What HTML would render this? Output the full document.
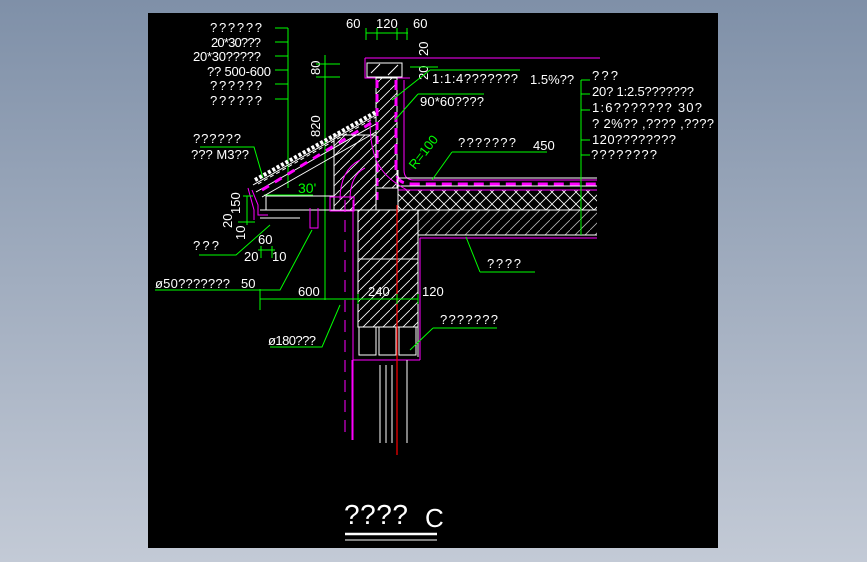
<!DOCTYPE html>
<html><head><meta charset="utf-8"><style>
html,body{margin:0;padding:0;width:867px;height:562px;overflow:hidden;background:linear-gradient(#7f90a8,#c3cad6);}
svg{position:absolute;left:0;top:0}
text{font-family:"Liberation Sans Narrow","Liberation Sans",sans-serif;fill:#fff;font-size:13px}
.g{stroke:#00ff00;fill:none;stroke-width:1}
.w{stroke:#fff;fill:none;stroke-width:1}
.m{stroke:#ff00ff;fill:none;stroke-width:1}
.gt{fill:#00ff00}
</style></head><body>
<svg width="867" height="562" viewBox="0 0 867 562">
<defs>
<pattern id="hatch" width="10" height="10" patternUnits="userSpaceOnUse"><path d="M0 10 L10 0" stroke="#fff" stroke-width="0.8"/></pattern>
<pattern id="cross" width="12" height="12" patternUnits="userSpaceOnUse"><path d="M0 0 L12 12 M12 0 L0 12" stroke="#fff" stroke-width="0.8"/></pattern>
</defs>
<rect x="148" y="13" width="570" height="535" fill="#000"/>

<text x="210" y="32" textLength="52">??????</text>
<text x="211" y="47" textLength="50">20*30???</text>
<text x="193" y="61" textLength="68">20*30?????</text>
<text x="207" y="76" textLength="64">?? 500-600</text>
<text x="210" y="90" textLength="52">??????</text>
<text x="210" y="105" textLength="52">??????</text>
<path class="g" d="M288 28 V188 M275 28 H288 M275 42 H288 M275 56 H288 M275 70 H288 M275 84 H288 M275 99 H288"/>
<text x="193" y="143" textLength="48">??????</text>
<text x="191" y="159" textLength="58">??? M3??</text>
<path class="g" d="M200 147 H254 L263 178"/>

<text x="346" y="28">60</text><text x="376" y="28">120</text><text x="413" y="28">60</text>
<path class="g" d="M366 33 H408 M366 28 V40 M377 28 V40 M397 28 V40 M407 28 V40"/>
<text transform="translate(428,56) rotate(-90)">20</text>
<text transform="translate(428,80) rotate(-90)">20</text>
<path class="g" d="M410 58 H438 M410 67 H438"/>
<text transform="translate(320,75) rotate(-90)">80</text>
<text transform="translate(320,137) rotate(-90)">820</text>
<path class="g" d="M325 55 V300 M316 64 H340 M316 77 H340"/>
<text x="298" y="193" class="gt" style="font-size:14px">30'</text>
<path class="g" d="M264 195 H313"/>

<path class="m" d="M365 58 H600 M365 58 V78 H410" stroke-width="1.2"/>
<rect class="w" x="367" y="63" width="35" height="14"/>
<path class="w" d="M371 73 L380 64 M388 75 L398 65"/>
<rect x="376" y="78" width="21" height="110" fill="url(#hatch)" stroke="#fff"/>
<path d="M377 80 V200" stroke="#ff00ff" stroke-width="3" stroke-dasharray="8 6"/>
<path d="M396 80 V170 Q396 184 412 184 H597" stroke="#ff00ff" stroke-width="3" stroke-dasharray="10 6" fill="none"/>
<path class="m" d="M404 80 V170 Q404 180 414 180 H597"/>
<path class="w" d="M398 178 H597 M398 186 H597"/>
<path class="w" d="M253 185 L376 115 M256 192 L376 124 M262 197 L376 132"/>
<path d="M262 190 L376 120" stroke="#ff00ff" stroke-width="3" stroke-dasharray="8 7"/>
<path class="m" d="M252 190 L258 205 V215 H268 M248 188 L254 210 V220"/>
<path d="M255 180 L376 112" stroke="#fff" stroke-width="4" stroke-dasharray="3 2"/>
<path d="M258 184 L376 117" stroke="#fff" stroke-width="1" stroke-dasharray="4 3"/>
<rect x="334" y="135" width="42" height="75" fill="url(#hatch)" stroke="#fff"/>
<rect class="w" x="266" y="196" width="68" height="14"/>
<path class="w" d="M260 210 H358 M260 218 H300"/>
<rect class="m" x="330" y="197" width="24" height="14"/>
<path class="m" d="M310 208 V228 H318 V208 M360 160 Q340 170 340 200 M365 168 Q350 175 350 200 M353 200 V440"/>
<path class="m" d="M345 200 V440" stroke-dasharray="12 8"/>
<path class="m" d="M407 190 C 380 175 370 160 370 120"/>
<rect x="398" y="190" width="199" height="20" fill="url(#cross)"/>
<path class="m" d="M398 190 H597"/>
<path class="w" d="M355 210 H597 M418 235 H597 M418 235 V357"/>
<rect x="418" y="210" width="179" height="25" fill="url(#hatch)" opacity="0.7"/>
<path class="m" d="M420 238 H597 M420 238 V360 M353 210 V360 H420"/>
<rect x="358" y="210" width="60" height="117" fill="url(#hatch)" stroke="#fff"/>
<path class="w" d="M358 259 H418 M398 210 V170"/>
<rect class="w" x="359" y="327" width="17" height="28"/><rect class="w" x="379" y="327" width="17" height="28"/><rect class="w" x="399" y="327" width="17" height="28"/>
<path d="M397 205 V455" stroke="#ff0000" stroke-width="1.2"/>
<path class="w" d="M380 365 V443 M386 365 V443 M392 365 V443 M407 360 V443"/>
<path class="m" d="M352 360 V440"/>
<text transform="translate(415,170) rotate(-52)" class="gt">R=100</text>

<text x="432" y="83" textLength="86">1:1:4???????</text>
<path class="g" d="M430 70 H520 M430 70 L392 100"/>
<text x="530" y="84">1.5%??</text>
<text x="420" y="106" textLength="64">90*60????</text>
<path class="g" d="M418 94 H484 M418 94 L395 120"/>
<text x="458" y="147" textLength="58">???????</text><text x="533" y="150">450</text>
<path class="g" d="M452 152 H547 M452 152 L432 180"/>
<text x="592" y="80" textLength="26">???</text>
<text x="592" y="96" textLength="102">20? 1:2.5???????</text>
<text x="592" y="112" textLength="110">1:6???????   30?</text>
<text x="592" y="128" textLength="122">? 2%?? ,???? ,????</text>
<text x="592" y="144" textLength="84">120????????</text>
<text x="591" y="159" textLength="66">????????</text>
<path class="g" d="M581 80 V235 M581 80 H590 M581 94 H590 M581 110 H590 M581 140 H590 M581 155 H590"/>
<text x="487" y="268" textLength="34">????</text>
<path class="g" d="M480 272 H535 M480 272 L466 237"/>
<text x="440" y="324" textLength="58">???????</text>
<path class="g" d="M433 328 H497 M433 328 L410 350"/>

<text transform="translate(240,214) rotate(-90)">150</text>
<text transform="translate(232,228) rotate(-90)">20</text>
<text transform="translate(245,240) rotate(-90)">10</text>
<path class="g" d="M243 196 H253 M247 196 V225 M238 222 H255"/>
<text x="193" y="250" textLength="26">???</text>
<path class="g" d="M199 255 H236 L270 225"/>
<text x="258" y="244">60</text><text x="244" y="261">20</text><text x="272" y="261">10</text>
<path class="g" d="M258 250 H275 M261 246 V258 M272 246 V258"/>
<text x="155" y="288" textLength="75">ø50???????</text><text x="241" y="288">50</text>
<path class="g" d="M155 290 H280 L312 230"/>
<text x="298" y="296">600</text><text x="368" y="296">240</text><text x="422" y="296">120</text>
<path class="g" d="M260 299 H418 M260 289 V310 M358 294 V304 M397 294 V304 M418 294 V304"/>
<text x="268" y="345" textLength="48">ø180???</text>
<path class="g" d="M270 347 H322 L340 305"/>

<text x="344" y="524" style="font-size:28px" textLength="64">????</text>
<text x="425" y="527" style="font-size:26px">C</text>
<path d="M345 534 H437" stroke="#fff" stroke-width="2.5"/>
<path d="M345 540 H437" stroke="#fff" stroke-width="1"/>
</svg>
</body></html>
